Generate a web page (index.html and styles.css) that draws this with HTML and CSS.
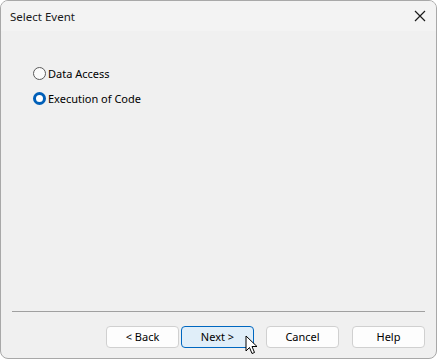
FILE: index.html
```html
<!DOCTYPE html>
<html lang="en">
  <head>
    <meta charset="UTF-8" />
    <title>Select Event</title>
    <link rel="stylesheet" href="styles.css">
  </head>
  <body>
    <div class="window">
      <div class="titlebar">
        <span class="title">Select Event</span>
        <svg class="close" width="12" height="12" viewBox="0 0 12 12">
          <path d="M1 1 L11 11 M11 1 L1 11" stroke="#1a1a1a" stroke-width="1.2" />
        </svg>
      </div>

      <div class="content">
        <div class="options">
          <label class="option">
            <span class="radio"></span>
            Data Access
          </label>
          <label class="option">
            <span class="radio checked"></span>
            Execution of Code
          </label>
        </div>

        <div class="footer">
          <hr class="separator" />
          <div class="buttons">
            <button class="btn back">&lt; Back</button>
            <button class="btn default">Next &gt;</button>
            <button class="btn cancel">Cancel</button>
            <button class="btn">Help</button>
          </div>
        </div>
      </div>

      <!-- mouse pointer over the Next button -->
      <svg class="cursor" width="14" height="21" viewBox="0 0 14 21">
        <path d="M1 1 L1 16 L4.5 12.5 L7 18.5 L9.5 17.5 L7 11.5 L12 11.5 Z"
          fill="#fff" stroke="#000" stroke-width="1" stroke-linejoin="round" />
      </svg>
    </div>
  </body>
</html>
```

FILE: styles.css
```css
html,
body {
  margin: 0;
  padding: 0;
  background-color: #fff;
}
body {
  font-family: "Noto Sans", "Liberation Sans", sans-serif;
  font-size: 11px;
  color: #000;
}
.window {
  position: relative;
  width: 437px;
  height: 359px;
  box-sizing: border-box;
  border: 1px solid #a8a8a8;
  border-radius: 8px;
  overflow: hidden;
  display: flex;
  flex-direction: column;
  background-color: #f0f0f0;
}
.titlebar {
  height: 30px;
  flex: none;
  display: flex;
  align-items: center;
  justify-content: space-between;
  padding: 0 10px 0 9px;
  background-color: #f3f3f3;
}
.title {
  font-size: 11.5px;
  color: #1a1a1a;
}
.close {
  display: block;
}
.content {
  flex: 1;
  display: flex;
  flex-direction: column;
  justify-content: space-between;
}
.options {
  display: flex;
  flex-direction: column;
  gap: 8px;
  padding: 34px 0 0 32px;
}
.option {
  display: flex;
  align-items: center;
  gap: 2px;
  height: 17px;
  color: #000;
}
.radio {
  width: 11px;
  height: 11px;
  border: 1px solid #5a5a5a;
  border-radius: 50%;
  background-color: #fbfbfb;
}
.radio.checked {
  width: 7px;
  height: 7px;
  border: 3px solid #005fb8;
  background-color: #fff;
}
.footer {
  padding: 0 11px 10px 11px;
}
.separator {
  margin: 0 0 14px 0;
  border: none;
  border-top: 1px solid #a0a0a0;
}
.buttons {
  display: flex;
  justify-content: flex-end;
}
.btn {
  width: 73px;
  height: 22px;
  box-sizing: border-box;
  font-family: "Noto Sans", "Liberation Sans", sans-serif;
  font-size: 11px;
  line-height: 18px;
  color: #000;
  background-color: #fdfdfd;
  border: 1px solid #d0d0d0;
  border-radius: 4px;
  padding: 0 0 1px 0;
}
.btn.back {
  margin-right: 2px;
}
.btn.default {
  background-color: #e0eef9;
  border-color: #0067c0;
  margin-right: 12px;
}
.btn.cancel {
  margin-right: 13px;
}
.cursor {
  position: absolute;
  left: 244px;
  top: 334px;
}
```
